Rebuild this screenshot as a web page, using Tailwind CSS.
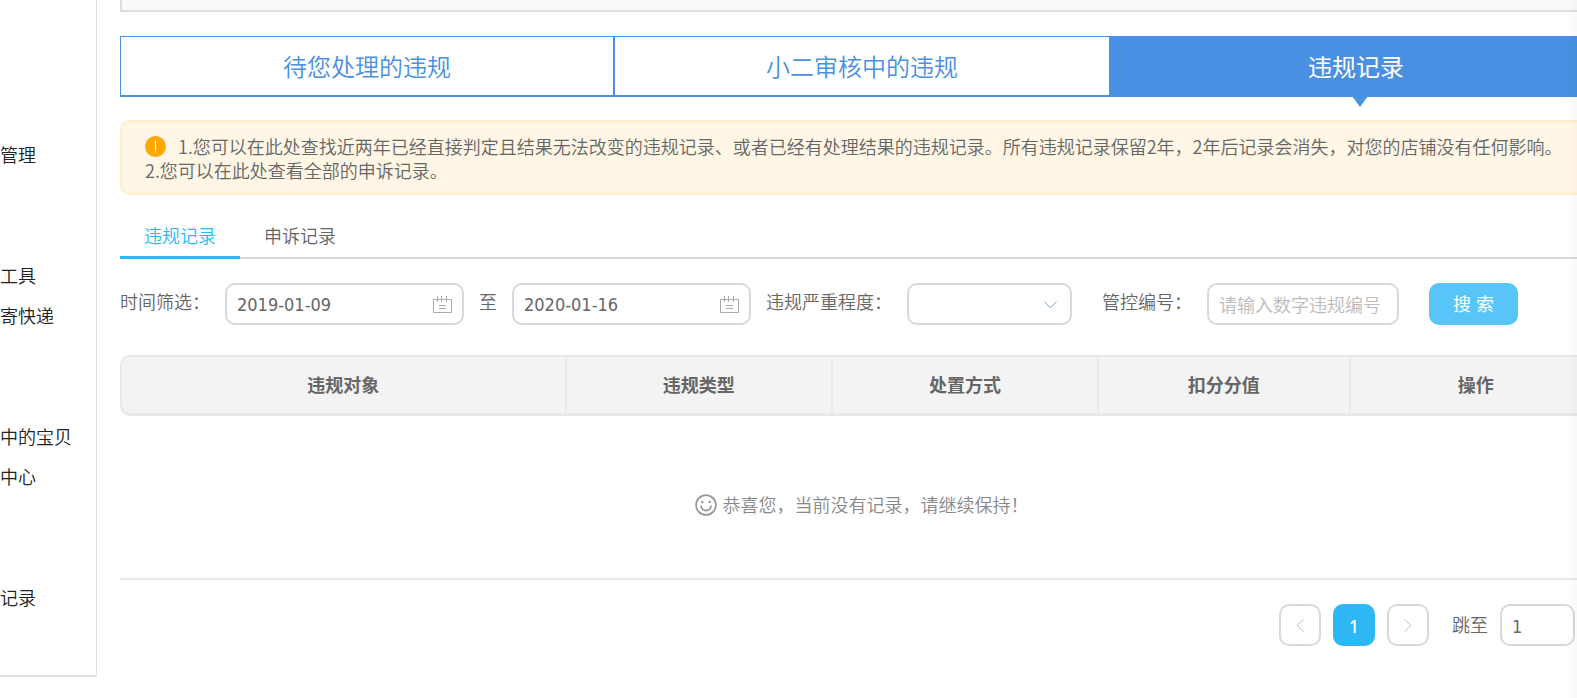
<!DOCTYPE html>
<html lang="zh-CN">
<head>
<meta charset="utf-8">
<meta name="viewport" content="width=device-width, initial-scale=1">
<title>违规记录</title>
<script src="https://cdn.jsdelivr.net/npm/@tailwindcss/browser@4"></script>
</head>
<body class="overflow-x-hidden bg-white font-['DejaVu_Sans_Condensed','Noto_Sans_CJK_SC',sans-serif] text-[18px] leading-6 text-[#666]">
<div class="flex items-start">

  <!-- Sidebar navigation -->
  <nav class="w-[97px] shrink-0 border-r border-b-2 border-[#dedede] pt-[136px] pb-14 font-[350] text-[#222]">
    <a href="#" class="flex h-10 items-center">管理</a>
    <a href="#" class="mt-[81px] flex h-10 items-center">工具</a>
    <a href="#" class="flex h-10 items-center">寄快递</a>
    <a href="#" class="mt-[81px] flex h-10 items-center">中的宝贝</a>
    <a href="#" class="flex h-10 items-center">中心</a>
    <a href="#" class="mt-[81px] flex h-10 items-center">记录</a>
  </nav>

  <!-- Main column, runs past the right edge of the window -->
  <main class="ml-[23px] -mr-[26px] min-w-0 flex-1">
    <div class="h-3 border-b-2 border-l-2 border-[#dedede] bg-[#fafafa]"></div>

    <div class="mt-6 grid h-[61px] grid-cols-3 border-t border-b-2 border-l border-[#4990e2] text-[24px] text-[#4990e2]">
      <button type="button" class="border-r-2 border-[#4990e2] pt-1 font-[350]">待您处理的违规</button>
      <button type="button" class="pt-1 font-[350]">小二审核中的违规</button>
      <button type="button" class="relative bg-[#4990e2] pt-1 text-white">违规记录
        <svg class="absolute top-full left-1/2 -ml-1 mt-px h-[11px] w-4" viewBox="0 0 16 11" fill="#4990e2"><path d="M0 0H16L8 11Z"/></svg>
      </button>
    </div>

    <div class="mt-[23px] rounded-[10px] border-2 border-[#ffeecb] bg-[#fff6e5] pt-3 pb-[11px] pl-[23px] font-['Noto_Sans_CJK_SC',sans-serif] font-[350]">
      <div class="flex items-center">
        <svg class="mr-3 h-[21px] w-[21px] shrink-0" viewBox="0 0 21 21"><circle cx="10.5" cy="10.5" r="10.5" fill="#ffa800"/><path d="M10.5 4.5V14M10.5 15.3V16.8" stroke="#fff" stroke-width="1.1" fill="none"/></svg>
        <p class="whitespace-nowrap">1.您可以在此处查找近两年已经直接判定且结果无法改变的违规记录、或者已经有处理结果的违规记录。所有违规记录保留2年，2年后记录会消失，对您的店铺没有任何影响。</p>
      </div>
      <p>2.您可以在此处查看全部的申诉记录。</p>
    </div>

    <div class="mt-5 flex h-11 border-b-2 border-[#d9d9d9] font-[350]">
      <button type="button" class="-mb-[2px] border-b-3 border-[#2db7f5] px-6 pt-0.5 text-[#2db7f5]">违规记录</button>
      <button type="button" class="-mb-[2px] border-b-3 border-transparent px-6 pt-0.5">申诉记录</button>
    </div>

    <form class="mt-6 flex items-center font-[350]">
      <label for="from" class="pb-0.5 whitespace-nowrap">时间筛选：</label>
      <div class="ml-[15px] flex h-[42px] w-[239px] items-center rounded-[10px] border-2 border-[#d9d9d9] px-[10px]">
        <input id="from" type="text" value="2019-01-09" class="min-w-0 flex-1 pt-0.5 outline-none">
        <svg class="h-[17px] w-[19px]" viewBox="0 0 19 17" fill="none" stroke="#aaa"><path d="M.5 3.5H18.5V16.5H.5ZM4.5 0V6M8.5 0V6M13.5 0V6M6 9.5H13M6 12.5H13"/></svg>
      </div>
      <label for="to" class="mx-[15px] pb-0.5">至</label>
      <div class="flex h-[42px] w-[239px] items-center rounded-[10px] border-2 border-[#d9d9d9] px-[10px]">
        <input id="to" type="text" value="2020-01-16" class="min-w-0 flex-1 pt-0.5 outline-none">
        <svg class="h-[17px] w-[19px]" viewBox="0 0 19 17" fill="none" stroke="#aaa"><path d="M.5 3.5H18.5V16.5H.5ZM4.5 0V6M8.5 0V6M13.5 0V6M6 9.5H13M6 12.5H13"/></svg>
      </div>
      <label for="level" class="ml-[15px] pb-0.5 whitespace-nowrap">违规严重程度：</label>
      <div class="relative ml-[15px] w-[165px]">
        <select id="level" class="block h-[42px] w-full appearance-none rounded-[10px] border-2 border-[#d9d9d9] px-[10px] outline-none"><option value=""></option></select>
        <svg class="pointer-events-none absolute top-[18px] right-[15px] h-2 w-[13px]" viewBox="0 0 13 8" fill="none" stroke="#7fa9bd"><path d="M.5 .5L6.5 7L12.5 .5"/></svg>
      </div>
      <label for="code" class="ml-[30px] pb-0.5 whitespace-nowrap">管控编号：</label>
      <input id="code" type="text" placeholder="请输入数字违规编号" class="ml-[15px] h-[42px] w-[192px] rounded-[10px] border-2 border-[#d9d9d9] px-[10px] pt-0.5 outline-none placeholder:text-[#bbb]">
      <button type="button" class="ml-[30px] h-[42px] w-[89px] rounded-[10px] bg-[#57c5f7] pt-0.5 font-normal text-white">搜 索</button>
    </form>

    <div class="mt-[30px] overflow-hidden rounded-[10px] border-2 border-b-3 border-[#e9e9e9] bg-[#f3f3f3]">
      <table class="w-full table-fixed">
        <thead>
          <tr class="h-14">
            <th class="w-[30%] border-r-2 border-[#e9e9e9] pt-0.5 font-bold">违规对象</th>
            <th class="w-[18%] border-r-2 border-[#e9e9e9] pt-0.5 font-bold">违规类型</th>
            <th class="w-[18%] border-r-2 border-[#e9e9e9] pt-0.5 font-bold">处置方式</th>
            <th class="w-[17%] border-r-2 border-[#e9e9e9] pt-0.5 font-bold">扣分分值</th>
            <th class="w-[17%] pt-0.5 font-bold">操作</th>
          </tr>
        </thead>
      </table>
    </div>
    <div class="flex items-center justify-center gap-[6px] border-b-2 border-[#e9e9e9] pt-[76px] pb-[60px] font-[350] text-[#888]">
      <svg class="h-[22px] w-[22px]" viewBox="0 0 22 22" fill="none" stroke="#999" stroke-width="1.8"><circle cx="11" cy="11" r="9.9"/><path d="M6 11.5a5 5 0 0 0 10 0"/><circle cx="7.3" cy="8" r="1.3" fill="#999" stroke="none"/><circle cx="14.7" cy="8" r="1.3" fill="#999" stroke="none"/></svg>
      <p class="pt-0.5">恭喜您，当前没有记录，请继续保持！</p>
    </div>

    <div class="mt-6 flex items-center justify-end gap-3 pr-7">
      <button type="button" aria-label="上一页" class="flex h-[42px] w-[42px] items-center justify-center rounded-[10px] border-2 border-[#d9d9d9]">
        <svg class="h-[13px] w-2" viewBox="0 0 8 13" fill="none" stroke="#bbb"><path d="M7.5 .5L1 6.5L7.5 12.5"/></svg>
      </button>
      <button type="button" class="h-[42px] w-[42px] rounded-[10px] bg-[#2db7f5] pt-0.5 font-['Noto_Sans',sans-serif] font-medium text-white">1</button>
      <button type="button" aria-label="下一页" class="flex h-[42px] w-[42px] items-center justify-center rounded-[10px] border-2 border-[#d9d9d9]">
        <svg class="h-[13px] w-2" viewBox="0 0 8 13" fill="none" stroke="#bbb"><path d="M.5 .5L7 6.5L.5 12.5"/></svg>
      </button>
      <label for="page" class="ml-[11px] pt-0.5 font-[350]">跳至</label>
      <input id="page" type="text" value="1" class="h-[42px] w-[75px] rounded-[10px] border-2 border-[#d9d9d9] px-[10px] pt-0.5 outline-none">
    </div>
  </main>
</div>

<!-- Soft shade along the window's right edge -->
<div class="pointer-events-none fixed inset-y-0 right-0 w-3 bg-linear-to-r from-transparent to-black/2"></div>
</body>
</html>
